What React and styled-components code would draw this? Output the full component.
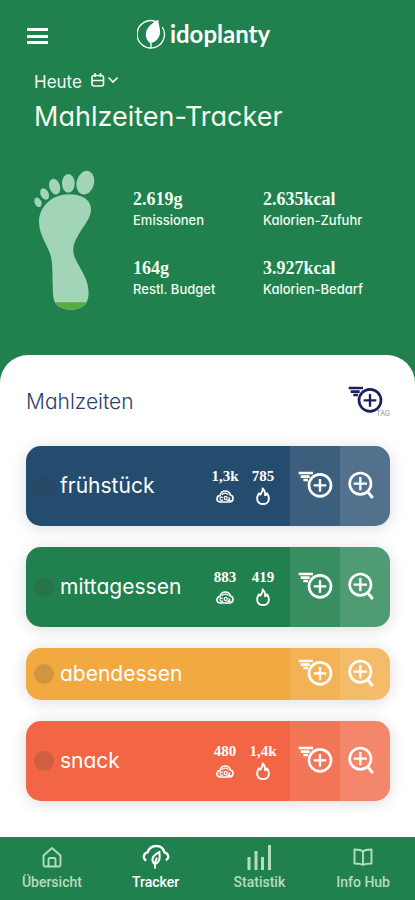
import styled, { createGlobalStyle } from "styled-components";

const GlobalStyle = createGlobalStyle`
  * {
    box-sizing: border-box;
  }

  body {
    margin: 0;
    background: #fff;
    font-family: Inter, "Open Sans", sans-serif;
    font-feature-settings: "cv11";
  }

  button {
    padding: 0;
    border: 0;
    background: none;
    color: inherit;
    font: inherit;
    cursor: pointer;
  }

  h1, h2, h3, p, dl, dd, ul {
    margin: 0;
    padding: 0;
    font-weight: 400;
  }

  svg {
    display: block;
  }
`;

const Page = styled.div`
  min-height: 100vh;
  display: flex;
  flex-direction: column;
  background: #20814e;
`;

const Hero = styled.header`
  padding: 12px 34px 45px;
  color: #f3faf0;
`;

const TopBar = styled.div`
  display: grid;
  grid-template-columns: 1fr auto 1fr;
  align-items: center;
  height: 48px;
  margin: 0 -7px;
`;

const MenuButton = styled.button`
  width: 21px;
  height: 16px;
  display: flex;
  flex-direction: column;
  justify-content: space-between;

  span {
    width: 100%;
    height: 3px;
    background: #fff;
  }
`;

const Logo = styled.a`
  display: flex;
  align-items: center;
  gap: 4px;
  padding: 0 8px 4px 0;
  color: #fff;
  font: 700 24px/32px Lato, sans-serif;
  text-decoration: none;
`;

const DateButton = styled.button`
  display: flex;
  align-items: center;
  gap: 8px;
  margin-top: 12px;
  font-size: 17px;
  line-height: 20px;

  svg {
    margin-bottom: 4px;
  }
`;

const Title = styled.h1`
  margin-top: 8px;
  font-size: 27px;
  line-height: 34px;
`;

const Summary = styled.div`
  display: flex;
  align-items: flex-start;
  gap: 38px;
  margin-top: 36px;
`;

const Facts = styled.dl`
  flex: 1;
  display: grid;
  grid-template-columns: 130px 1fr;
  row-gap: 28px;
  padding-top: 19px;
`;

const Fact = styled.div`
  display: flex;
  flex-direction: column-reverse;
  gap: 1px;
  white-space: nowrap;

  dt {
    font-size: 13px;
    font-weight: 500;
    line-height: 20px;
  }

  dd {
    font: 700 18px/20px "Liberation Serif", serif;
  }
`;

const Sheet = styled.main`
  flex: 1;
  padding: 28px 25px 36px 26px;
  border-radius: 28px 28px 0 0;
  background: #fff;
`;

const SheetHead = styled.div`
  display: flex;
  justify-content: space-between;
  align-items: center;
  height: 38px;
  margin-bottom: 25px;
  color: #2b4069;
`;

const SheetTitle = styled.h2`
  font-size: 21px;
  font-weight: 300;
  line-height: 24px;
`;

const DayButton = styled.button`
  position: relative;
  width: 42px;
  padding-bottom: 4px;
  color: #1b2160;

  span {
    position: absolute;
    right: 0;
    bottom: 0;
    color: #8a8f9b;
    font-size: 7px;
    line-height: 8px;
  }
`;

const Meals = styled.ul`
  display: flex;
  flex-direction: column;
  gap: 21px;
  list-style: none;
`;

const Meal = styled.li`
  display: flex;
  height: ${({ $empty }) => ($empty ? "52px" : "80px")};
  overflow: hidden;
  border-radius: 15px;
  background: ${({ $color }) => $color};
  box-shadow: 0 2px 16px rgba(0, 0, 0, 0.14);
  color: #fff;
`;

const MealName = styled.h3`
  flex: 1;
  display: flex;
  align-items: center;
  gap: 6px;
  padding-left: 8px;
  font-size: 21px;
  line-height: 24px;

  &::before {
    content: "";
    width: 20px;
    height: 20px;
    border-radius: 50%;
    background: rgba(60, 60, 60, 0.18);
  }
`;

const Values = styled.div`
  display: grid;
  grid-template-columns: 38px 38px;
  align-content: center;
  padding-right: 8px;
`;

const Value = styled.div`
  display: flex;
  flex-direction: column;
  align-items: center;
  gap: 2px;
  font: 700 15px/18px "Liberation Serif", serif;
`;

const Action = styled.button`
  width: 50px;
  display: grid;
  place-items: center;

  && {
    padding: 0 ${({ $strong }) => ($strong ? "8px" : "0")} 2px 0;
    background: rgba(255, 255, 255, ${({ $strong }) => ($strong ? 0.21 : 0.11)});
  }
`;

const TabBar = styled.nav`
  display: grid;
  grid-template-columns: repeat(4, 1fr);
  height: 63px;
  background: #20814e;
`;

const Tab = styled.a`
  display: flex;
  flex-direction: column;
  align-items: center;
  gap: 2px;
  padding-top: 6px;
  color: ${({ $active }) => ($active ? "#fff" : "#b4dcc0")};
  font: 500 14px/18px Roboto, sans-serif;
  text-decoration: none;
`;

function LogoMark() {
  return (
    <svg width="29" height="30" viewBox="0 0 87 90" fill="none" aria-hidden="true">
      <path d="M57 8A41 41 0 1 0 76 24" stroke="currentColor" strokeWidth="4" />
      <path d="M64 2C36 16 22 34 28 56c2 8 8 14 13 17 20-6 29-20 28-38C68 20 64 12 64 2Z" fill="currentColor" />
      <path d="M42 66v20" stroke="currentColor" strokeWidth="4" />
    </svg>
  );
}

function CalendarIcon() {
  return (
    <svg width="28" height="14" viewBox="0 0 28 14" fill="none" stroke="currentColor" strokeWidth="1.6" aria-hidden="true">
      <rect x="2" y="2.5" width="11.5" height="10.5" rx="2" />
      <path d="M2 7.5h11.5M5 0v4M10.5 0v4" />
      <path d="M18.500 4.500l4.500 4.500 4.500-4.500" />
    </svg>
  );
}

function Footprint() {
  return (
    <svg width="61" height="140" viewBox="40 28 183 420" fill="#a2d5b7" role="img" aria-label="Fußabdruck">
      <path d="M145 101c39 0 68 17 66 48-1 22-17 40-33 66-15 25-25 44-18 69 8 26 31 52 40 85 6 22 5 42-3 57-9 14-27 21-48 21s-39-8-46-22c-7-15-6-31-7-58-1-32 0-55-5-79-8-31-37-67-36-105 1-49 43-82 90-82Z" />
      <path d="M104 425h93c-8 14-27 22-48 22-20 0-37-8-45-22Z" fill="#55ad42" />
      <ellipse cx="194" cy="66" rx="26" ry="36" transform="rotate(14 194 66)" />
      <ellipse cx="143" cy="68" rx="19" ry="28" />
      <ellipse cx="102" cy="78" rx="16" ry="24" transform="rotate(-18 102 78)" />
      <ellipse cx="72" cy="100" rx="12" ry="18" transform="rotate(-26 72 100)" />
      <ellipse cx="52" cy="125" rx="10" ry="15" transform="rotate(-24 52 125)" />
    </svg>
  );
}

function QuickAddIcon() {
  return (
    <svg width="35" height="28" viewBox="895 393 105 84" fill="none" stroke="currentColor" aria-hidden="true">
      <path d="M897 399h43M903 410h27M911 420h14" strokeWidth="8" />
      <circle cx="961" cy="436" r="33" strokeWidth="8" />
      <path d="M961 417v38M942 436h38" strokeWidth="7" />
    </svg>
  );
}

function SearchAddIcon() {
  return (
    <svg width="26" height="28" viewBox="1044 391 78 84" fill="none" stroke="currentColor" aria-hidden="true">
      <circle cx="1081" cy="429" r="32" strokeWidth="8" />
      <path d="M1081 409v40M1061 429h40" strokeWidth="7" />
      <path d="M1103 453l15 19" strokeWidth="9" />
    </svg>
  );
}

function CloudIcon() {
  return (
    <svg width="18" height="18" viewBox="0 0 54 54" fill="none" stroke="currentColor" strokeWidth="5" aria-hidden="true">
      <path d="M14 45C5 45 2 40 3 34c1-5 5-8 9-8 2-9 8-14 16-14s13 4 15 12c5 1 8 5 8 10 0 7-5 11-12 11Z" />
      <path d="M21 32c-5-4-10 0-9 4 1 5 7 5 9 2M29 28c-5 0-6 10 0 10s6-10 0-10ZM37 33c3-2 6 1 3 4l-4 3h8" strokeWidth="3.5" />
      <path d="M18 23c6-6 14-6 19 0" strokeWidth="4" />
    </svg>
  );
}

function FlameIcon() {
  return (
    <svg width="18" height="18" viewBox="0 0 54 54" fill="none" stroke="currentColor" strokeWidth="5.5" strokeLinejoin="round" aria-hidden="true">
      <path d="M26 4c1 9-2 13-7 19l-4-4c-9 13-8 31 12 32 19 0 22-18 12-32-2 4-4 6-6 6 1-9-1-16-7-21Z" />
    </svg>
  );
}

function HomeIcon() {
  return (
    <svg width="28" height="28" viewBox="0 0 28 28" fill="none" stroke="currentColor" strokeWidth="1.9" strokeLinejoin="round" aria-hidden="true">
      <path d="M5.500 12.500L14 5l8.500 7.500V22a1.500 1.500 0 0 1-1.500 1.500H7A1.500 1.500 0 0 1 5.500 22Z" />
      <path d="M10.500 23.500v-7a1.500 1.500 0 0 1 1.500-1.500h4a1.500 1.500 0 0 1 1.500 1.500v7" />
    </svg>
  );
}

function TrackerIcon() {
  return (
    <svg width="28" height="28" viewBox="0 0 84 84" fill="none" stroke="currentColor" strokeWidth="7" strokeLinecap="round" aria-hidden="true">
      <path d="M10 51C2 44 5 30 17 28 21 15 31 9 43 9c13 0 21 7 24 19 13 3 15 16 7 22" />
      <path d="M52 27C38 34 29 43 32 55c1 5 4 7 7 8 10-4 14-13 14-22 0-5-1-9-1-14ZM39 60v14M39 58l5-12" strokeWidth="6" />
    </svg>
  );
}

function StatsIcon() {
  return (
    <svg width="28" height="28" viewBox="0 0 28 28" fill="none" stroke="currentColor" strokeWidth="3" aria-hidden="true">
      <path d="M4 14v13M11 8v19M17.500 14v13M24.500 2v25" />
    </svg>
  );
}

function BookIcon() {
  return (
    <svg width="28" height="28" viewBox="0 0 28 28" fill="none" stroke="currentColor" strokeWidth="1.9" strokeLinejoin="round" aria-hidden="true">
      <path d="M14 8.500C12 6.500 9 6.500 5.500 6.500v14c3 0 6 0 8.500 1.500 2.500-1.500 5.500-1.500 8.500-1.500v-14c-3.500 0-6.500 0-8.500 2Zm0 0V22" />
    </svg>
  );
}

const facts = [
  { label: "Emissionen", value: "2.619g" },
  { label: "Kalorien-Zufuhr", value: "2.635kcal" },
  { label: "Restl. Budget", value: "164g" },
  { label: "Kalorien-Bedarf", value: "3.927kcal" },
];

const meals = [
  { name: "frühstück", color: "#244c6e", co2: "1,3k", kcal: "785" },
  { name: "mittagessen", color: "#20814e", co2: "883", kcal: "419" },
  { name: "abendessen", color: "#f1a940" },
  { name: "snack", color: "#f26645", co2: "480", kcal: "1,4k" },
];

const tabs = [
  { label: "Übersicht", icon: HomeIcon },
  { label: "Tracker", icon: TrackerIcon, active: true },
  { label: "Statistik", icon: StatsIcon },
  { label: "Info Hub", icon: BookIcon },
];

export default function App() {
  return (
    <Page>
      <GlobalStyle />
      <Hero>
        <TopBar>
          <MenuButton aria-label="Menü">
            <span />
            <span />
            <span />
          </MenuButton>
          <Logo href="#">
            <LogoMark />
            idoplanty
          </Logo>
        </TopBar>
        <DateButton>
          Heute
          <CalendarIcon />
        </DateButton>
        <Title>Mahlzeiten-Tracker</Title>
        <Summary>
          <Footprint />
          <Facts>
            {facts.map(({ label, value }) => (
              <Fact key={label}>
                <dt>{label}</dt>
                <dd>{value}</dd>
              </Fact>
            ))}
          </Facts>
        </Summary>
      </Hero>
      <Sheet>
        <SheetHead>
          <SheetTitle>Mahlzeiten</SheetTitle>
          <DayButton>
            <QuickAddIcon />
            <span>TAG</span>
          </DayButton>
        </SheetHead>
        <Meals>
          {meals.map(({ name, color, co2, kcal }) => (
            <Meal key={name} $color={color} $empty={!co2}>
              <MealName>{name}</MealName>
              {co2 && (
                <Values>
                  <Value>
                    {co2}
                    <CloudIcon />
                  </Value>
                  <Value>
                    {kcal}
                    <FlameIcon />
                  </Value>
                </Values>
              )}
              <Action aria-label={`${name} schnell hinzufügen`}>
                <QuickAddIcon />
              </Action>
              <Action $strong aria-label={`${name} suchen`}>
                <SearchAddIcon />
              </Action>
            </Meal>
          ))}
        </Meals>
      </Sheet>
      <TabBar>
        {tabs.map(({ label, icon: Icon, active }) => (
          <Tab key={label} href="#" $active={active}>
            <Icon />
            {label}
          </Tab>
        ))}
      </TabBar>
    </Page>
  );
}
